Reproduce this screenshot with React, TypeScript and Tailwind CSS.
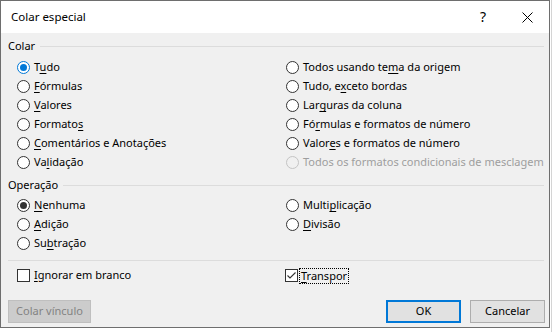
import React from "react";

type RState = "off" | "blue" | "dark" | "disabled";

function Label({ a, u, b, disabled }: { a: string; u?: string; b?: string; disabled?: boolean }) {
  return (
    <span className={disabled ? "whitespace-nowrap text-[#9e9e9e]" : "whitespace-nowrap text-black"}>
      {a}
      {u ? <span className="underline decoration-1 underline-offset-[2px]">{u}</span> : null}
      {b}
    </span>
  );
}

function Radio({ a, u, b, state = "off" }: { a: string; u?: string; b?: string; state?: RState }) {
  const ring =
    state === "blue"
      ? "border-[#0078d7] bg-white"
      : state === "disabled"
      ? "border-[#c4c4c4] bg-[#f0f0f0]"
      : "border-[#333333] bg-white";
  return (
    <div className="flex h-[19px] items-center gap-[4px]">
      <span className={"flex h-[13px] w-[13px] shrink-0 items-center justify-center rounded-full border " + ring}>
        {state === "blue" ? <span className="h-[7px] w-[7px] rounded-full bg-[#0078d7]" /> : null}
        {state === "dark" ? <span className="h-[7px] w-[7px] rounded-full bg-[#333333]" /> : null}
      </span>
      <Label a={a} u={u} b={b} disabled={state === "disabled"} />
    </div>
  );
}

function Header({ text }: { text: string }) {
  return (
    <div className="flex h-[14px] items-center gap-[5px] pl-[7px] pr-[5px]">
      <span className="whitespace-nowrap leading-[14px] text-black">{text}</span>
      <span className="h-px flex-1 bg-[#dcdcdc]" />
    </div>
  );
}

export default function App() {
  return (
    <div className="relative h-[332px] w-[552px] overflow-hidden bg-white font-['Noto_Sans','Open_Sans',sans-serif] text-[11px]">
      <div className="absolute right-0 top-0 h-full w-px bg-[#d4d4d4]" />
      <div className="flex h-[328px] w-[550px] flex-col border border-[#6e6e6e] bg-[#f0f0f0]">
        {/* title bar */}
        <div className="flex h-[32px] shrink-0 items-center bg-white pl-[10px]">
          <span className="text-[11.5px] text-black">Colar especial</span>
          <span className="ml-auto text-[14px] leading-none text-black">?</span>
          <svg className="ml-[36px] mr-[16px]" width="11" height="11" viewBox="0 0 11 11">
            <path d="M0.5 0.5 L10.5 10.5 M10.5 0.5 L0.5 10.5" stroke="#000" strokeWidth="1" />
          </svg>
        </div>

        {/* Colar */}
        <div className="mt-[6px]">
          <Header text="Colar" />
        </div>
        <div className="mt-[5px] grid grid-cols-[269px_1fr] pl-[16px]">
          <div className="flex flex-col">
            <Radio a="T" u="u" b="do" state="blue" />
            <Radio a="" u="F" b="órmulas" />
            <Radio a="" u="V" b="alores" />
            <Radio a="Formato" u="s" b="" />
            <Radio a="" u="C" b="omentários e Anotações" />
            <Radio a="Va" u="l" b="idação" />
          </div>
          <div className="flex flex-col">
            <Radio a="Todos usando te" u="m" b="a da origem" />
            <Radio a="Tudo, e" u="x" b="ceto bordas" />
            <Radio a="Lar" u="g" b="uras da coluna" />
            <Radio a="Fó" u="r" b="mulas e formatos de número" />
            <Radio a="Valor" u="e" b="s e formatos de número" />
            <Radio a="Todos os formatos condicionais de mesclagem" state="disabled" />
          </div>
        </div>

        {/* Operação */}
        <div className="mt-[6px]">
          <Header text="Operação" />
        </div>
        <div className="mt-[4px] grid grid-cols-[269px_1fr] pl-[16px]">
          <div className="flex flex-col">
            <Radio a="" u="N" b="enhuma" state="dark" />
            <Radio a="" u="A" b="dição" />
            <Radio a="Su" u="b" b="tração" />
          </div>
          <div className="flex flex-col">
            <Radio a="Multi" u="p" b="licação" />
            <Radio a="" u="D" b="ivisão" />
          </div>
        </div>

        <div className="ml-[7px] mr-[5px] mt-[7px] h-px bg-[#dcdcdc]" />

        {/* checkboxes */}
        <div className="mt-[5px] grid h-[19px] grid-cols-[268px_1fr] pl-[16px]">
          <div className="flex items-center gap-[4px]">
            <span className="h-[13px] w-[13px] shrink-0 border border-[#333333] bg-white" />
            <Label a="" u="I" b="gnorar em branco" />
          </div>
          <div className="flex items-center gap-[1px]">
            <span className="flex h-[13px] w-[13px] shrink-0 items-center justify-center border border-[#333333] bg-white">
              <svg width="11" height="11" viewBox="0 0 11 11">
                <path d="M1.5 5.5 L4 8 L9.5 2.5" fill="none" stroke="#333333" strokeWidth="1.1" />
              </svg>
            </span>
            <span className="border border-dotted border-black px-[1px] leading-[14px]">
              <Label a="" u="T" b="ranspor" />
            </span>
          </div>
        </div>

        {/* buttons */}
        <div className="mt-[15px] flex items-center pl-[7px] pr-[4px]">
          <button className="h-[23px] w-[83px] border border-[#bfbfbf] bg-[#cccccc] text-[11px] text-[#838383]">
            Colar vínculo
          </button>
          <button className="ml-auto h-[23px] w-[75px] border-2 border-[#0078d7] bg-[#e1e1e1] text-[11px] text-black">
            OK
          </button>
          <button className="ml-[9px] h-[23px] w-[75px] border border-[#adadad] bg-[#e1e1e1] text-[11px] text-black">
            Cancelar
          </button>
        </div>
      </div>
    </div>
  );
}
